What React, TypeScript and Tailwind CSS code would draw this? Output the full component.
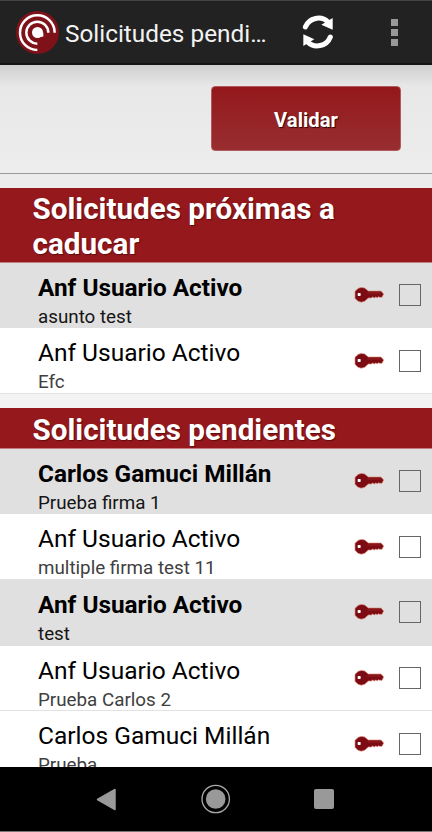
type Item = { name: string; subject: string; unread?: boolean };

const expiring: Item[] = [
  { name: "Anf Usuario Activo", subject: "asunto test", unread: true },
  { name: "Anf Usuario Activo", subject: "Efc" },
];

const pending: Item[] = [
  { name: "Carlos Gamuci Millán", subject: "Prueba firma 1", unread: true },
  { name: "Anf Usuario Activo", subject: "multiple firma test 11" },
  { name: "Anf Usuario Activo", subject: "test", unread: true },
  { name: "Anf Usuario Activo", subject: "Prueba Carlos 2" },
  { name: "Carlos Gamuci Millán", subject: "Prueba" },
];

function Logo() {
  return (
    <svg className="mt-px size-[45px] shrink-0" viewBox="45 30 135 135" fill="none">
      <circle cx="112.500" cy="97.500" r="64.500" fill="#7f1119" />
      <path d="M164 98A52 52 0 1 0 112 150" stroke="#fff" strokeWidth="7.500" />
      <path d="M145 98A33 33 0 1 0 112 131" stroke="#fff" strokeWidth="7.500" />
      <circle cx="112.500" cy="97.500" r="16.500" fill="#fff" />
      <path d="M118 98H130V110H118Z" fill="#fff" />
    </svg>
  );
}

function RefreshIcon() {
  return (
    <svg className="h-[34px] w-8" viewBox="67 46 96 102" fill="none">
      <g stroke="#fff" strokeWidth="15" strokeLinecap="round">
        <path d="M77 82A42 42 0 0 1 146 68" />
        <path d="M152 112A42 42 0 0 1 83 126" />
      </g>
      <path d="M159 55V90L125 75L140 66Z" fill="#fff" />
      <path d="M71 139V104L104 119L89 128Z" fill="#fff" />
    </svg>
  );
}

function KeyIcon() {
  return (
    <svg className="ml-px h-4 w-[30px]" viewBox="0 0 90 48">
      <path
        d="M13 4Q22 -1 32 3L43 12H81L89 21L84 31H77L74 29L70 32L65 30L61 33L56 30L52 33H43L32 43Q22 48 12 43L3 34V13Z"
        fill="#7c0b13"
        stroke="#dc8c78"
        strokeWidth="2"
      />
      <path d="M40 18H81" stroke="#a32a25" strokeWidth="2" />
      <rect x="11" y="18" width="9" height="9" rx="2" fill="#fff" />
    </svg>
  );
}

function SectionHeader({ title, compact }: { title: string; compact?: boolean }) {
  return (
    <h2
      className={`border-b border-[#c47c80] bg-[#94181c] pr-8 pb-[0.500px] pl-[32.500px] text-[29.650px] leading-[35px] font-bold text-white [text-shadow:1px_1px_1px_#30000080] ${
        compact ? "pt-[3px]" : "pt-1"
      }`}
    >
      {title}
    </h2>
  );
}

function Row({ item }: { item: Item }) {
  return (
    <li
      className={`flex h-[65.700px] items-center border-b pr-[11px] pl-[38px] ${
        item.unread ? "border-[#e0e0e0] bg-[#e0e0e0]" : "border-[#e2e2e2] bg-white"
      }`}
    >
      <div className="flex-1 self-stretch pt-2.5">
        <div
          className={`leading-[30px] text-black ${item.unread ? "text-[24.350px] font-bold" : "text-[24.500px] font-normal"}`}
        >
          {item.name}
        </div>
        <div
          className={`pt-px text-[18.800px] leading-[26px] ${item.unread ? "text-[#151515]" : "text-[#404040]"}`}
        >
          {item.subject}
        </div>
      </div>
      <KeyIcon />
      <span className="ml-[15px] size-[22px] border border-[#666]" />
    </li>
  );
}

export default function App() {
  return (
    <div className="flex h-[832px] w-[432px] flex-col overflow-hidden bg-[#ececec] font-[Roboto,sans-serif]">
      <header className="flex h-[65px] shrink-0 items-center border-t border-b-2 border-t-[#444] border-b-[#151515] bg-[#222] pr-[34px] pl-[15px]">
        <Logo />
        <h1 className="ml-[5px] w-[237px] pt-[3px] text-[24.350px] leading-8 whitespace-nowrap text-[#f3f3f3]">
          Solicitudes pendi…
        </h1>
        <RefreshIcon />
        <div className="ml-auto flex flex-col gap-[3px]">
          <span className="size-[7px] bg-[#999]" />
          <span className="size-[7px] bg-[#999]" />
          <span className="size-[7px] bg-[#999]" />
        </div>
      </header>

      <div className="flex h-[109px] shrink-0 items-start justify-end border-b border-[#999] bg-linear-to-b from-[#cfcfcf] via-[#e8e8e8] via-20% to-[#ededed] pt-[21px] pr-[31px]">
        <button className="h-[65px] w-[190px] rounded-[4px] border border-[#b05a5d] bg-linear-to-b from-[#94171b] to-[#982d30] pt-[3px] text-[20.200px] font-bold text-white [text-shadow:1px_1px_1px_#300000]">
          Validar
        </button>
      </div>

      <main className="min-h-0 flex-1 overflow-hidden pt-3.5">
        <SectionHeader title="Solicitudes próximas a caducar" compact />
        <ul>
          {expiring.map((item, i) => (
            <Row key={i} item={item} />
          ))}
        </ul>
        <div className="h-[14.300px] bg-[#f3f3f3]" />
        <SectionHeader title="Solicitudes pendientes" />
        <ul>
          {pending.map((item, i) => (
            <Row key={i} item={item} />
          ))}
        </ul>
      </main>

      <nav className="flex h-[65px] shrink-0 items-center border-b border-[#777] bg-black pl-[96px]">
        <svg className="h-[23px] w-5" viewBox="0 0 20 23">
          <path d="M1.500 11.500L19 1.500V21.500Z" fill="#999" stroke="#999" strokeWidth="1.500" strokeLinejoin="round" />
        </svg>
        <svg className="ml-[85px] size-[30px]" viewBox="0 0 30 30">
          <circle cx="14.700" cy="15" r="13.700" fill="none" stroke="#aaa" strokeWidth="1.300" />
          <circle cx="14.700" cy="15" r="9.800" fill="#999" />
        </svg>
        <span className="ml-[83px] size-[20px] rounded-[2px] bg-[#999]" />
      </nav>
    </div>
  );
}
